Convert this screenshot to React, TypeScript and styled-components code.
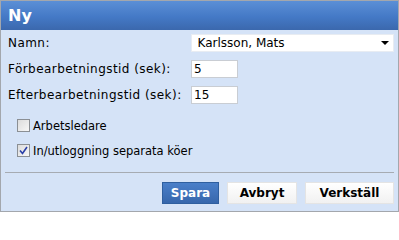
import styled, { createGlobalStyle } from "styled-components";

const Global = createGlobalStyle`
  html, body { margin: 0; padding: 0; background: #ffffff; }
  body { font-family: "DejaVu Sans", Verdana, sans-serif; }
`;

const Dialog = styled.div`
  width: 397px;
  height: 210px;
  border: 1px solid #a3a7ad;
  background: #d5e3f7;
  display: flex;
  flex-direction: column;
`;

const Header = styled.div`
  height: 29px;
  flex-shrink: 0;
  background: linear-gradient(to bottom, #5b8fd6 0%, #4479c6 55%, #3b68ad 100%);
  color: #ffffff;
  font-weight: bold;
  font-size: 16px;
  display: flex;
  align-items: center;
  padding-left: 7px;
`;

const Body = styled.div`
  padding: 0 4px 0 7px;
  font-size: 12px;
  color: #000000;
`;

const Row = styled.div`
  display: flex;
  align-items: center;
  height: 26px;
`;

const Label = styled.span`
  width: 183px;
  letter-spacing: 0.45px;
`;

const SelectBox = styled.div`
  width: 204px;
  height: 18px;
  box-sizing: border-box;
  background: #ffffff;
  border: 1px solid #e8ecf2;
  display: flex;
  align-items: center;
  justify-content: space-between;
  padding: 0 4px 0 6px;
`;

const Arrow = styled.span`
  width: 0;
  height: 0;
  border-left: 4px solid transparent;
  border-right: 4px solid transparent;
  border-top: 4px solid #000000;
`;

const TextInput = styled.div`
  width: 47px;
  height: 18px;
  box-sizing: border-box;
  background: #ffffff;
  border: 1px solid #c9cdd3;
  display: flex;
  align-items: center;
  padding-left: 2px;
`;

const CheckRow = styled.div<{ $top: number }>`
  display: flex;
  align-items: center;
  gap: 3px;
  margin-top: ${(p) => p.$top}px;
  padding-left: 9px;
  height: 15px;
  font-size: 11.5px;
`;

const Box = styled.span`
  width: 13px;
  height: 13px;
  box-sizing: border-box;
  border: 1px solid #8b8f94;
  background: linear-gradient(135deg, #dcdcdc 0%, #f7f7f7 100%);
  display: flex;
  align-items: center;
  justify-content: center;
`;

const Separator = styled.div`
  margin: 14px 4px 0 4px;
  border-top: 1px solid #a6abb2;
`;

const Buttons = styled.div`
  display: flex;
  justify-content: flex-end;
  gap: 8px;
  padding: 9px 4px 0 0;
`;

const Button = styled.button<{ $primary?: boolean; $w: number }>`
  width: ${(p) => p.$w}px;
  height: 22px;
  font-family: "DejaVu Sans", Verdana, sans-serif;
  font-weight: bold;
  font-size: 12px;
  padding: 0;
  border: 1px solid ${(p) => (p.$primary ? "#2f5f9f" : "#e4e4e4")};
  background: ${(p) =>
    p.$primary
      ? "linear-gradient(to bottom, #4a7fc9, #3767ac)"
      : "linear-gradient(to bottom, #ffffff, #f1f1f1)"};
  color: ${(p) => (p.$primary ? "#ffffff" : "#000000")};
`;

export default function App() {
  return (
    <>
      <Global />
      <Dialog>
        <Header>Ny</Header>
        <Body>
          <Row>
            <Label>Namn:</Label>
            <SelectBox>
              <span>Karlsson, Mats</span>
              <Arrow />
            </SelectBox>
          </Row>
          <Row>
            <Label>Förbearbetningstid (sek):</Label>
            <TextInput>5</TextInput>
          </Row>
          <Row>
            <Label>Efterbearbetningstid (sek):</Label>
            <TextInput>15</TextInput>
          </Row>
          <CheckRow $top={10}>
            <Box />
            <span>Arbetsledare</span>
          </CheckRow>
          <CheckRow $top={10}>
            <Box>
              <svg width="9" height="9" viewBox="0 0 9 9">
                <path d="M1 4.5 L3.5 7.5 L8 1" stroke="#2a3fa8" strokeWidth="1.6" fill="none" />
              </svg>
            </Box>
            <span>In/utloggning separata köer</span>
          </CheckRow>
        </Body>
        <Separator />
        <Buttons>
          <Button $primary $w={57}>Spara</Button>
          <Button $w={70}>Avbryt</Button>
          <Button $w={89}>Verkställ</Button>
        </Buttons>
      </Dialog>
    </>
  );
}
